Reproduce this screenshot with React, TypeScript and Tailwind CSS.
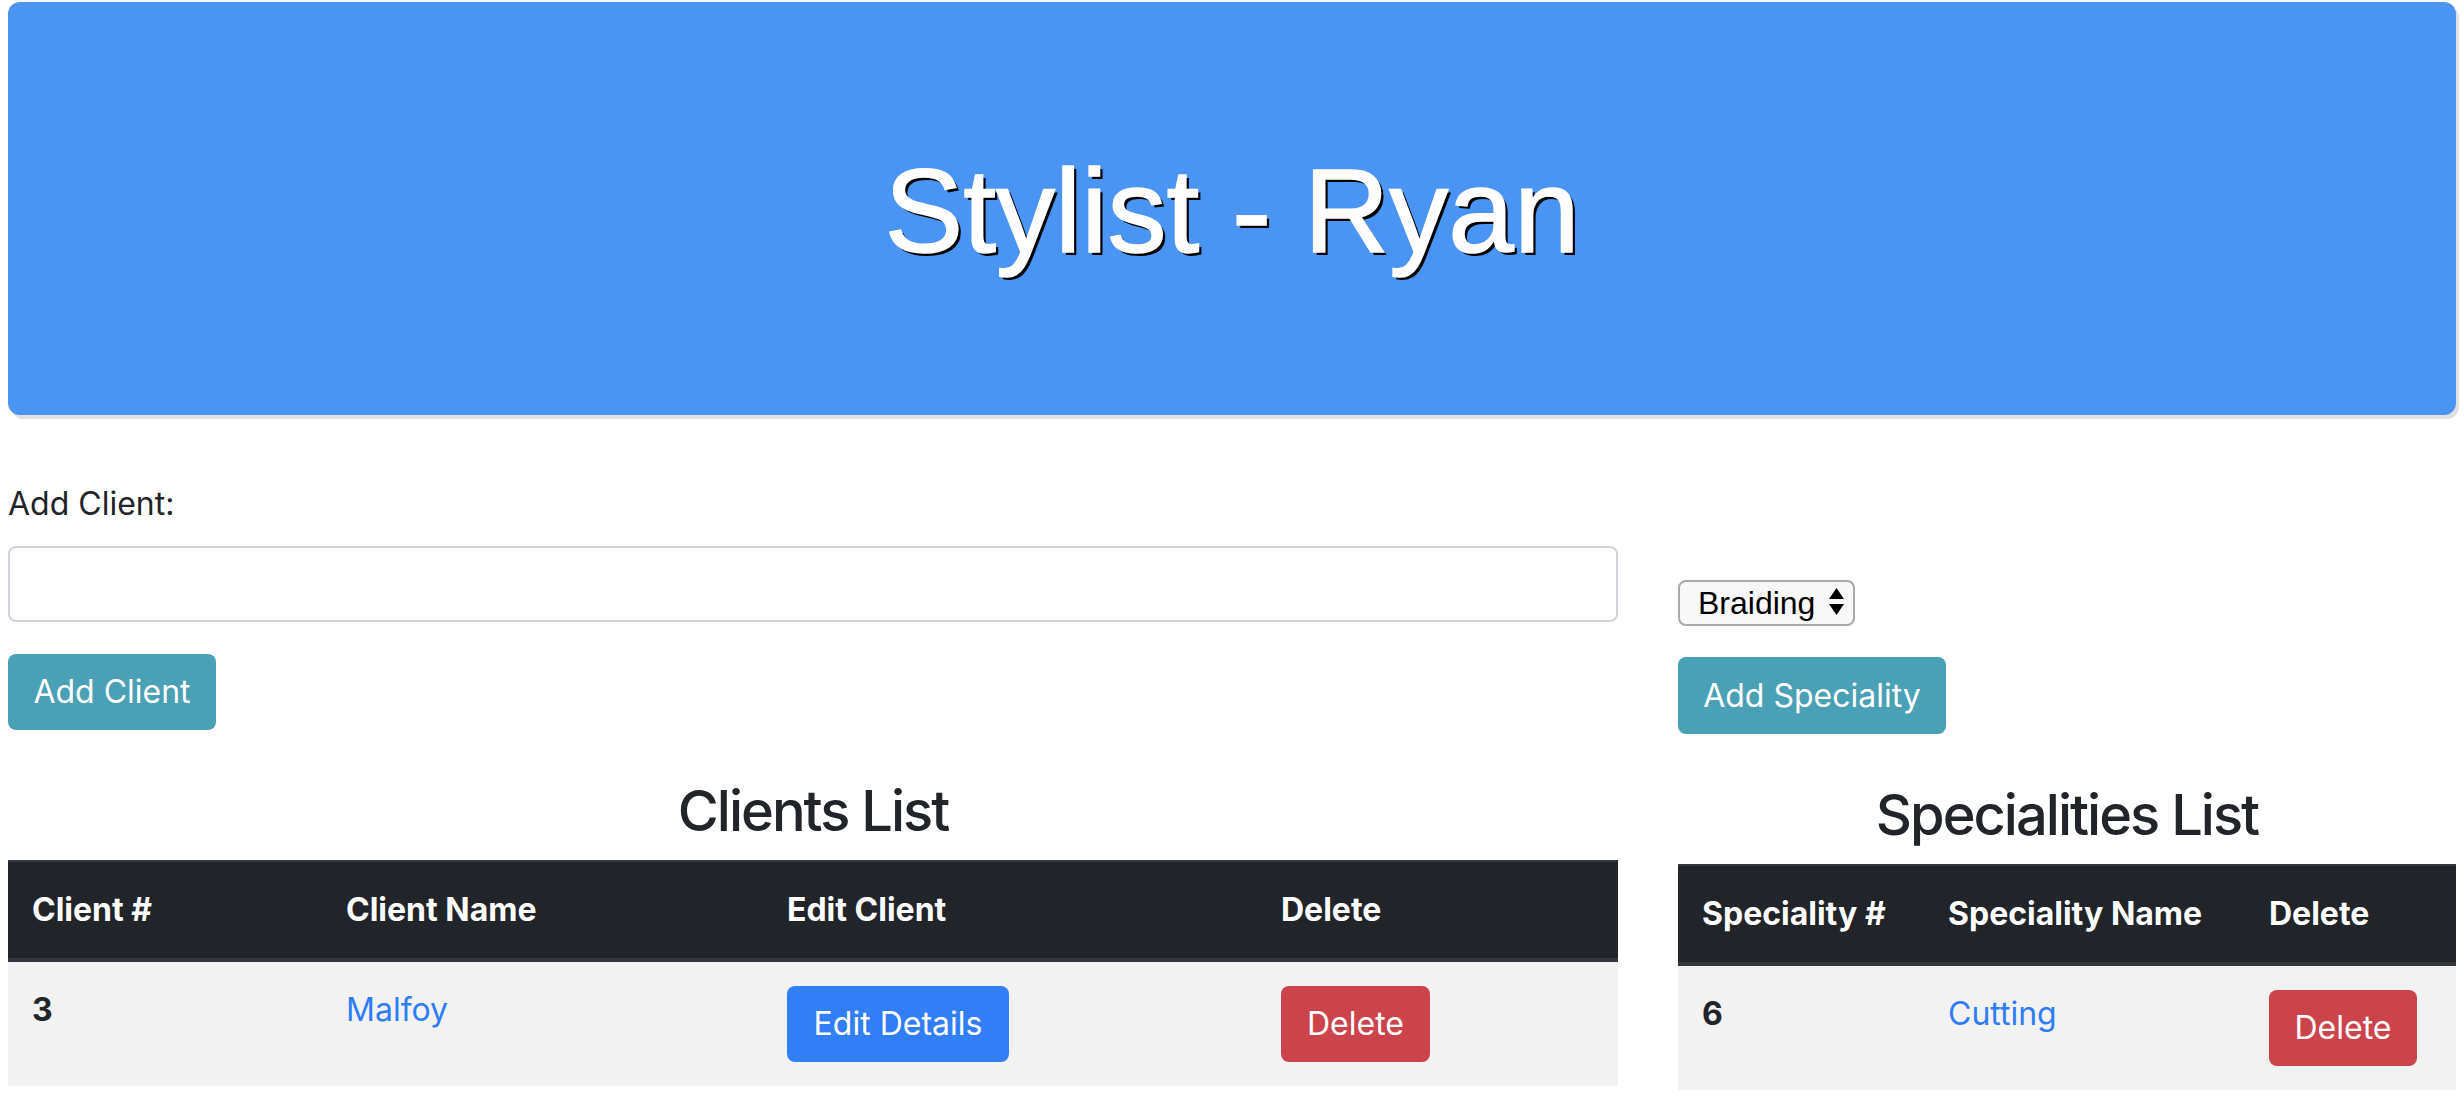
import React from "react";

const sans = "font-['Inter','Noto_Sans',sans-serif]";

function Btn({ color, children, className = "" }: { color: string; children: React.ReactNode; className?: string }) {
  return (
    <div
      className={`inline-flex items-center justify-center whitespace-nowrap h-[76px] rounded-[8px] text-white text-[32px] leading-[48px] ${sans} ${color} ${className}`}
    >
      {children}
    </div>
  );
}

function SelectBox() {
  return (
    <div className="inline-flex items-center h-[46px] w-[177px] border-2 border-[#a9a9a9] bg-[#f8f8f8] rounded-[8px] pl-[18px] pr-[8px] font-['Liberation_Sans',Arial,sans-serif] text-[32px] text-black">
      <span className="leading-none">Braiding</span>
      <svg className="ml-auto" width="17" height="30" viewBox="0 0 17 30">
        <polygon points="8.5,0 16,11 1,11" fill="#000" />
        <polygon points="1,16 16,16 8.5,27" fill="#000" />
      </svg>
    </div>
  );
}

const th = "text-left font-bold text-[32px] leading-[48px] px-[24px] py-[24px] border-b-4 border-[#32383e] whitespace-nowrap";
const td = "px-[24px] py-[24px] text-[32px] leading-[48px]";

export default function App() {
  return (
    <div className={`bg-white min-h-[1102px] px-[8px] pt-[2px] text-[#212529] ${sans}`}>
      <div className="h-[413px] rounded-[12px] bg-[#4a94f4] shadow-[3px_4px_0_#e0e0e0] flex items-center justify-center">
        <h1 className="font-['Liberation_Sans',Arial,sans-serif] text-[118px] leading-none text-white [-webkit-text-stroke:1.5px_white] [text-shadow:3px_3px_0_#000] pt-[4px]">
          Stylist - Ryan
        </h1>
      </div>

      <div className="flex gap-[60px]">
        {/* Left column */}
        <div className="w-[1610px]">
          <label className="block mt-[65px] text-[32px] leading-[48px] mb-[18px]">Add Client:</label>
          <div className="h-[76px] border-2 border-[#ced4da] rounded-[8px] bg-white" />
          <Btn color="bg-[#4aa0b5]" className="mt-[32px] w-[208px]">Add Client</Btn>
          <h2 className="mt-[48px] mb-[15px] text-center text-[56px] leading-[67px] font-medium tracking-[-2px]">Clients List</h2>
          <table className="w-full table-fixed border-collapse">
            <colgroup>
              <col className="w-[314px]" />
              <col className="w-[441px]" />
              <col className="w-[494px]" />
              <col />
            </colgroup>
            <thead>
              <tr className="bg-[#212529] text-white border-t-2 border-[#32383e]">
                <th className={th}>Client #</th>
                <th className={th}>Client Name</th>
                <th className={th}>Edit Client</th>
                <th className={th}>Delete</th>
              </tr>
            </thead>
            <tbody>
              <tr className="bg-[#f2f2f2] align-top">
                <td className={`${td} font-bold`}>3</td>
                <td className={`${td} text-[#2f7df6]`}>Malfoy</td>
                <td className={td}>
                  <Btn color="bg-[#327ef6]" className="w-[222px]">Edit Details</Btn>
                </td>
                <td className={td}>
                  <Btn color="bg-[#cc444b]" className="w-[149px]">Delete</Btn>
                </td>
              </tr>
            </tbody>
          </table>
        </div>

        {/* Right column */}
        <div className="w-[778px]">
          <div className="mt-[165px] h-[46px]">
            <SelectBox />
          </div>
          <Btn color="bg-[#4aa0b5]" className="mt-[31px] w-[268px] h-[77px]">Add Speciality</Btn>
          <h2 className="mt-[48px] mb-[15px] text-center text-[56px] leading-[67px] font-medium tracking-[-2px]">Specialities List</h2>
          <table className="w-full table-fixed border-collapse">
            <colgroup>
              <col className="w-[246px]" />
              <col className="w-[321px]" />
              <col />
            </colgroup>
            <thead>
              <tr className="bg-[#212529] text-white border-t-2 border-[#32383e]">
                <th className={th}>Speciality #</th>
                <th className={th}>Speciality Name</th>
                <th className={th}>Delete</th>
              </tr>
            </thead>
            <tbody>
              <tr className="bg-[#f2f2f2] align-top">
                <td className={`${td} font-bold`}>6</td>
                <td className={`${td} text-[#2f7df6]`}>Cutting</td>
                <td className={td}>
                  <Btn color="bg-[#cc444b]" className="w-[148px]">Delete</Btn>
                </td>
              </tr>
            </tbody>
          </table>
        </div>
      </div>
    </div>
  );
}
